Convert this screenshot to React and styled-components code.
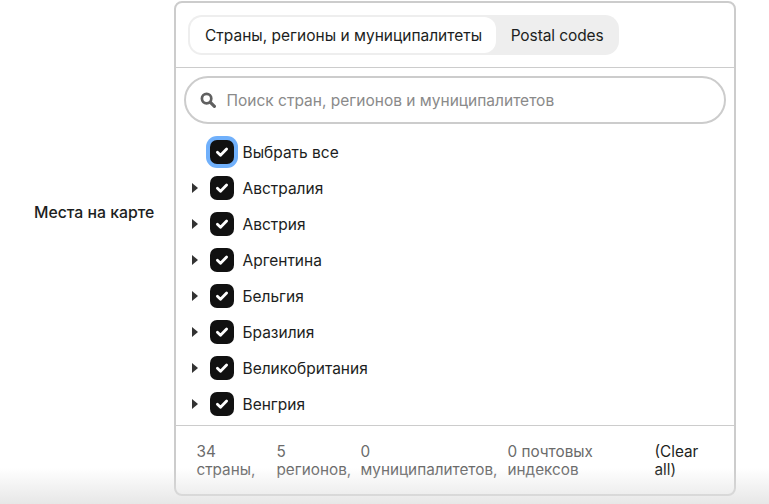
import React from "react";
import styled, { createGlobalStyle } from "styled-components";

const Global = createGlobalStyle`
  html, body { margin: 0; padding: 0; background: #fff; }
  body { font-family: Inter, "Liberation Sans", sans-serif; color: #1c1e21; }
  #root { width: 769px; height: 504px; overflow: hidden; }
`;

const Page = styled.div`
  position: relative;
  width: 769px;
  height: 504px;
  overflow: hidden;
  display: flex;
  align-items: flex-start;
  padding: 1px 0 0 34px;
  box-sizing: border-box;
`;

const FieldLabel = styled.div`
  width: 140px;
  margin-top: 203px;
  font-size: 15.8px;
  line-height: 18px;
  font-weight: 500;
  color: #1c1e21;
`;

const Panel = styled.div`
  width: 562px;
  height: 495px;
  box-sizing: border-box;
  border: 2px solid #ccc;
  border-radius: 8px;
  display: flex;
  flex-direction: column;
`;

const TabsBar = styled.div`
  height: 65px;
  flex: none;
  box-sizing: border-box;
  padding: 12px;
  border-bottom: 1px solid #ccc;
  display: flex;
  align-items: flex-start;
`;

const Tabs = styled.div`
  display: flex;
  height: 40px;
  box-sizing: border-box;
  padding: 2px;
  background: #eee;
  border-radius: 14px;
`;

const Tab = styled.div`
  padding: ${(p) => (p.$active ? "0 13.5px 0 15px" : "0 13.5px 0 15px")};
  display: flex;
  align-items: center;
  font-size: 15.5px;
  letter-spacing: ${(p) => (p.$active ? "0" : "-0.1px")};
  color: #1c1e21;
  border-radius: 12px;
  background: ${(p) => (p.$active ? "#fff" : "transparent")};
`;

const Search = styled.div`
  flex: none;
  margin: 8px 8px 0 8px;
  height: 48px;
  box-sizing: border-box;
  border: 2px solid #ccc;
  border-radius: 24px;
  display: flex;
  align-items: center;
  padding-left: 14px;
  gap: 10.5px;
  font-size: 15.5px;
  color: #8a8a8a;
`;

const List = styled.div`
  flex: 1;
  margin-top: 10px;
  display: flex;
  flex-direction: column;
  overflow: hidden;
`;

const Row = styled.div`
  height: 36px;
  flex: none;
  display: flex;
  align-items: center;
  padding-left: 16px;
  font-size: 15.5px;
  color: #1c1e21;
`;

const Caret = styled.span`
  width: 0;
  height: 0;
  flex: none;
  border-left: 6px solid #333;
  border-top: 5px solid transparent;
  border-bottom: 5px solid transparent;
  visibility: ${(p) => (p.$hidden ? "hidden" : "visible")};
`;

const Check = styled.span`
  width: 24px;
  height: 24px;
  flex: none;
  margin: 0 8.5px 0 12px;
  border-radius: 7px;
  background: #111;
  display: flex;
  align-items: center;
  justify-content: center;
  box-shadow: ${(p) => (p.$focus ? "0 0 0 4px #70b0fb" : "none")};
`;

const Footer = styled.div`
  flex: none;
  height: 69px;
  box-sizing: border-box;
  border-top: 1px solid #ccc;
  padding: 17px 0 0 20.5px;
  display: flex;
  align-items: flex-start;
  font-size: 15.3px;
  line-height: 18px;
  color: #6b6b6b;
`;

const Count = styled.div`
  width: ${(p) => p.$w}px;
  flex: none;
  white-space: pre-line;
`;

const ClearAll = styled.div`
  width: 60px;
  flex: none;
  color: #1c1e21;
`;

const BottomFade = styled.div`
  position: absolute;
  left: 0;
  right: 0;
  bottom: 0;
  height: 36px;
  background: linear-gradient(rgba(225, 225, 225, 0), rgba(225, 225, 225, 0.8));
  pointer-events: none;
`;

const CheckMark = () => (
  <svg width="14" height="14" viewBox="0 0 14 14" fill="none">
    <path d="M2.4 7.3 5.5 10.3 11.6 4" stroke="#fff" strokeWidth="2.8" strokeLinecap="round" strokeLinejoin="round" />
  </svg>
);

const SearchIcon = () => (
  <svg width="16" height="16" viewBox="0 0 16 16" fill="none">
    <circle cx="6.6" cy="6.6" r="4.7" stroke="#606060" strokeWidth="2.7" />
    <path d="M10.4 10.4 14.4 14.4" stroke="#606060" strokeWidth="3.2" strokeLinecap="round" />
  </svg>
);

const countries = ["Австралия", "Австрия", "Аргентина", "Бельгия", "Бразилия", "Великобритания", "Венгрия"];

export default function App() {
  return (
    <Page>
      <Global />
      <FieldLabel>Места на карте</FieldLabel>
      <Panel>
        <TabsBar>
          <Tabs>
            <Tab $active>Страны, регионы и муниципалитеты</Tab>
            <Tab>Postal codes</Tab>
          </Tabs>
        </TabsBar>
        <Search>
          <SearchIcon />
          Поиск стран, регионов и муниципалитетов
        </Search>
        <List>
          <Row>
            <Caret $hidden />
            <Check $focus><CheckMark /></Check>
            Выбрать все
          </Row>
          {countries.map((c) => (
            <Row key={c}>
              <Caret />
              <Check><CheckMark /></Check>
              {c}
            </Row>
          ))}
        </List>
        <Footer>
          <Count $w={80}>{"34\nстраны,"}</Count>
          <Count $w={84}>{"5\nрегионов,"}</Count>
          <Count $w={147}>{"0\nмуниципалитетов,"}</Count>
          <Count $w={147}>{"0 почтовых\nиндексов"}</Count>
          <ClearAll>(Clear all)</ClearAll>
        </Footer>
      </Panel>
      <BottomFade />
    </Page>
  );
}
